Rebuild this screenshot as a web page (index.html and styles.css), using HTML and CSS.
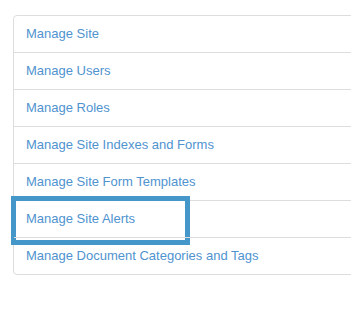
FILE: index.html
```html
<!DOCTYPE html>
<html lang="en">
  <head>
    <meta charset="UTF-8" />
    <title>Site Admin</title>
    <link rel="stylesheet" href="styles.css">
  </head>
  <body>
    <!-- Admin menu -->
    <div class="list-group">
      <a href="#" class="list-item">Manage Site</a>
      <a href="#" class="list-item">Manage Users</a>
      <a href="#" class="list-item">Manage Roles</a>
      <a href="#" class="list-item">Manage Site Indexes and Forms</a>
      <a href="#" class="list-item">Manage Site Form Templates</a>
      <a href="#" class="list-item highlighted">Manage Site Alerts</a>
      <a href="#" class="list-item">Manage Document Categories and Tags</a>
    </div>
  </body>
</html>
```

FILE: styles.css
```css
body {
  margin: 0;
  padding: 15px 0 0 13px;
  background: #fff;
  font-family: "Liberation Sans", Arial, sans-serif;
  font-size: 13px;
  overflow: hidden;
}

.list-group {
  display: flex;
  flex-direction: column;
  margin-right: -10px; /* list runs on past the right edge */
  border: 1px solid #dddddd;
  border-radius: 4px;
}

.list-item {
  position: relative;
  display: block;
  padding: 8px 12px;
  line-height: 20px;
  color: #4f93cf;
  text-decoration: none;
  border-top: 1px solid #dddddd;
}
.list-item:first-child {
  border-top: none;
}

/* callout box drawn over the row */
.highlighted::after {
  content: "";
  position: absolute;
  left: -3px;
  top: -5px;
  width: 169px;
  height: 39px;
  border: 5px solid #4596c9;
}
```
